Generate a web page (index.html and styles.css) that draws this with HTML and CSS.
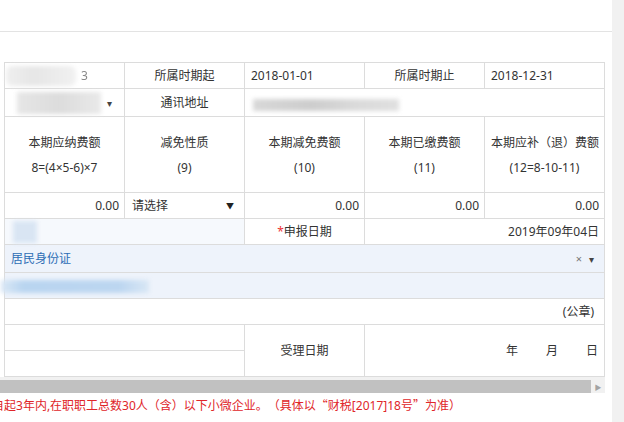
FILE: index.html
```html
<!DOCTYPE html>
<html lang="zh">
<head>
<meta charset="utf-8">
<link rel="stylesheet" href="styles.css">
</head>
<body>
<div class="main">
  <div class="topbar"></div>
  <table class="form">
    <colgroup><col><col><col><col><col></colgroup>
    <tr class="r26">
      <td><div class="c1a"><span class="blur b1"></span><span class="blurtxt">3</span></div></td>
      <td class="lbl">所属时期起</td>
      <td>2018-01-01</td>
      <td class="lbl">所属时期止</td>
      <td>2018-12-31</td>
    </tr>
    <tr class="r28">
      <td><div class="c1b"><span class="blur b2"></span><span class="caret">▾</span></div></td>
      <td class="lbl">通讯地址</td>
      <td colspan="3"><span class="blur b3"></span></td>
    </tr>
    <tr class="r76">
      <td class="hd"><div>本期应纳费额</div><div>8=(4×5-6)×7</div></td>
      <td class="hd"><div>减免性质</div><div>(9)</div></td>
      <td class="hd"><div>本期减免费额</div><div>(10)</div></td>
      <td class="hd"><div>本期已缴费额</div><div>(11)</div></td>
      <td class="hd"><div>本期应补（退）费额</div><div>(12=8-10-11)</div></td>
    </tr>
    <tr class="r26">
      <td class="num">0.00</td>
      <td><div class="sel"><span>请选择</span><span class="tri">▼</span></div></td>
      <td class="num">0.00</td>
      <td class="num">0.00</td>
      <td class="num">0.00</td>
    </tr>
    <tr class="r26">
      <td colspan="2" class="pale"><span class="blur b4"></span></td>
      <td class="lbl"><span class="req">*</span>申报日期</td>
      <td colspan="2" class="num">2019年09年04日</td>
    </tr>
    <tr class="r28">
      <td colspan="5" class="blue"><div class="idrow"><span class="idtxt">居民身份证</span><span class="ctl"><span class="x">×</span><span class="caret">▾</span></span></div></td>
    </tr>
    <tr class="r26">
      <td colspan="5" class="blue"><span class="blur b5"></span></td>
    </tr>
    <tr class="r26">
      <td colspan="5" class="num seal">(公章)</td>
    </tr>
    <tr class="r26">
      <td colspan="2"></td>
      <td rowspan="2" class="lbl">受理日期</td>
      <td rowspan="2" colspan="2" class="num ymd"><span>年</span><span>月</span><span>日</span></td>
    </tr>
    <tr class="r26">
      <td colspan="2"></td>
    </tr>
  </table>
  <div class="hscroll"><div class="thumb"></div><div class="arrow">▶</div></div>
  <div class="note"><span class="cut">自</span>起3年内,在职职工总数30人（含）以下小微企业。（具体以<span class="q">“</span>财税[2017]18号<span class="q">”</span>为准）</div>
</div>
<div class="strip"></div>
</body>
</html>
```
FILE: styles.css
```css
html, body {
  margin: 0;
  padding: 0;
}
body {
  width: 624px;
  height: 422px;
  overflow: hidden;
  background: #fff;
  display: flex;
  font-family: "Noto Sans", "Noto Sans CJK SC", sans-serif;
  font-size: 12px;
  color: #333;
  text-spacing-trim: space-all;
}
.main {
  width: 612px;
  overflow: hidden;
}
.strip {
  width: 12px;
  background: #f1f1f1;
}
.topbar {
  height: 31px;
  border-bottom: 1px solid #e3e3e3;
}
.form {
  border-collapse: collapse;
  table-layout: fixed;
  width: 601px;
  margin: 30px 0 0 4px;
}
.form col {
  width: 120px;
}
.form td {
  border: 1px solid #dcdcdc;
  padding: 0 6px;
  line-height: 16px;
  white-space: nowrap;
  overflow: visible;
  vertical-align: middle;
}
.r26 td { height: 25px; }
.r28 td { height: 27px; }
.r76 td { height: 75px; }
.lbl {
  text-align: center;
}
.num {
  text-align: right;
}
.form td.num {
  padding-right: 5px;
}
.hd {
  text-align: center;
}
.hd div {
  line-height: 25px;
}
.sel {
  display: flex;
  justify-content: space-between;
  align-items: center;
  padding-left: 1px;
  padding-right: 4px;
}
.tri {
  font-size: 8px;
  color: #222;
}
.caret {
  font-size: 10px;
  color: #444;
}
.c1a, .c1b {
  display: flex;
  align-items: center;
}
.blur {
  display: inline-block;
  filter: blur(2px);
  vertical-align: middle;
}
.b1 {
  width: 70px;
  height: 20px;
  margin-left: -5px;
  background: linear-gradient(90deg, #efefef, #e6e6e6 40%, #f1f1f1);
  border-radius: 6px;
}
.blurtxt {
  color: #888;
  margin-left: 5px;
  filter: blur(0.4px);
}
.c1b {
  justify-content: space-between;
  padding-right: 6px;
}
.b2 {
  width: 84px;
  height: 22px;
  margin-left: 6px;
  background: linear-gradient(90deg, #e6e6e6, #dcdcdc 50%, #e9e9e9);
}
.b3 {
  width: 146px;
  height: 12px;
  margin-left: 2px;
  margin-top: 4px;
  background: linear-gradient(90deg, #d8d8d8, #cdcdcd 40%, #dadada 70%, #e0e0e0);
}
.pale {
  background: #f6f9fd;
}
.b4 {
  width: 24px;
  height: 22px;
  margin-left: 2px;
  background: #d9e5f3;
}
.req {
  color: #e33;
}
.blue {
  background: #eef3fb;
}
.idrow {
  display: flex;
  justify-content: space-between;
  align-items: center;
  padding-left: 0;
  padding-right: 4px;
}
.idtxt {
  color: #2d6db5;
}
.ctl {
  display: flex;
  align-items: center;
  gap: 7px;
  color: #777;
}
.x {
  font-size: 11px;
}
.b5 {
  width: 148px;
  height: 13px;
  margin-left: -10px;
  background: linear-gradient(90deg, #dbe8f5, #b9d5f0 15%, #bcd6f0 80%, #d9e7f5);
}
.form td.seal {
  padding-right: 10px;
}
.ymd span {
  margin-left: 28px;
}
.form td.ymd {
  padding-right: 6px;
}
.hscroll {
  display: flex;
  width: 605px;
  height: 16px;
  box-sizing: border-box;
  padding-top: 3px;
  background: #f1f1f1;
}
.thumb {
  width: 591px;
  background: #c1c1c1;
}
.arrow {
  flex: 1;
  display: flex;
  align-items: center;
  justify-content: center;
  font-size: 7px;
  color: #a3a3a3;
}
.note {
  margin-top: 4px;
  margin-left: -8px;
  line-height: 16px;
  white-space: nowrap;
  color: #e0262a;
}
.q {
  font-family: "Noto Sans CJK SC", sans-serif;
}
```
